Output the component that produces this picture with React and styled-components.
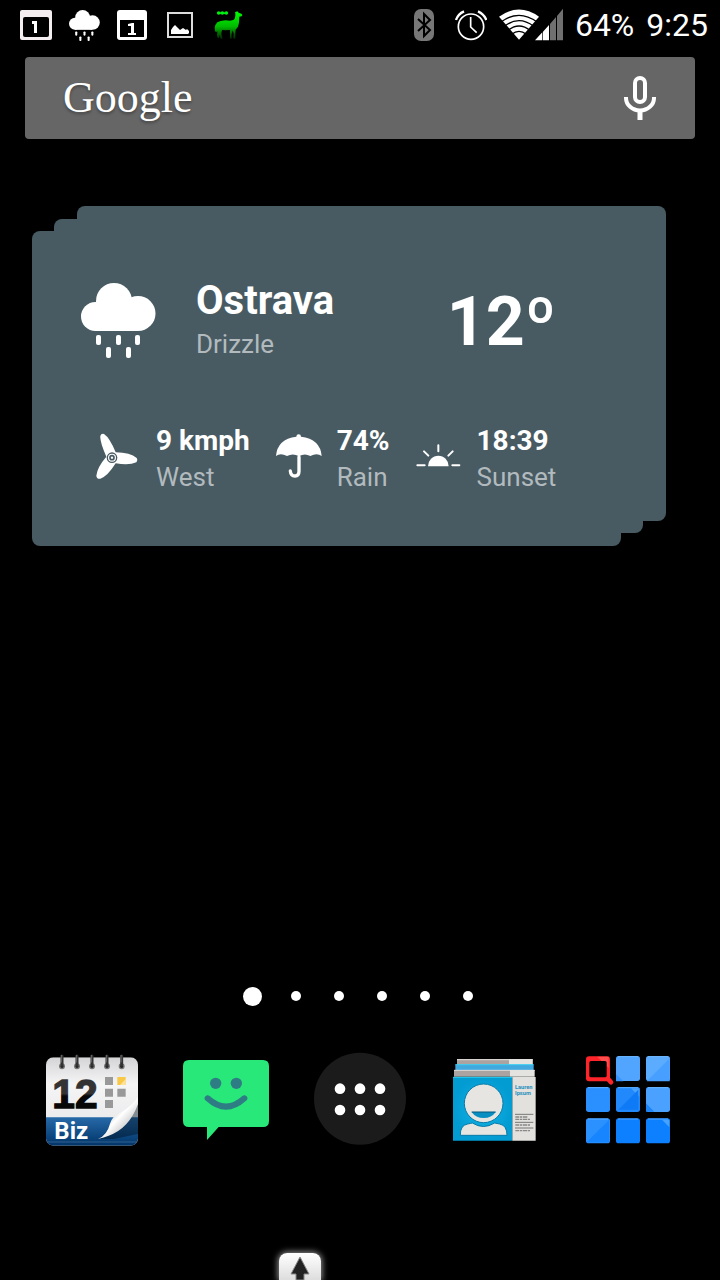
import React from "react";
import styled, { createGlobalStyle } from "styled-components";

const GlobalStyle = createGlobalStyle`
  *, *::before, *::after { box-sizing: border-box; }
  body { margin: 0; background: #000; color: #fff; font-family: Roboto, "Liberation Sans", sans-serif; }
  button { padding: 0; border: 0; background: none; color: inherit; font: inherit; cursor: pointer; }
  svg { display: block; }
`;

const Screen = styled.div`
  display: flex;
  flex-direction: column;
  min-height: 100vh;
  overflow: hidden;
  background: #000;
`;

const StatusBar = styled.header`
  display: flex;
  justify-content: space-between;
  align-items: center;
  height: 50px;
  padding: 0 12px;
`;

const Notifications = styled.div`
  display: flex;
`;

const NotificationCell = styled.span`
  display: flex;
  justify-content: center;
  align-items: center;
  width: 48px;
`;

const SystemIcons = styled.div`
  display: flex;
  align-items: center;
  font-size: 32px;
  line-height: 50px;
`;

const Indicators = styled.div`
  display: flex;
  align-items: center;
`;

const Indicator = styled.span`
  margin-left: ${({ $gap }) => $gap || 0}px;
`;

const Readout = styled.span`
  margin-left: 12px;
`;

const SearchBar = styled.div`
  display: flex;
  justify-content: space-between;
  align-items: center;
  height: 82px;
  margin: 7px 25px 0;
  padding: 0 39px 0 38px;
  border-radius: 4px;
  background: #666;
`;

const SearchButton = styled.button`
  flex: 1;
  text-align: left;
  font-family: "Liberation Serif", serif;
  font-size: 44px;
  line-height: 80px;
  text-shadow: 0 2px 3px rgba(0, 0, 0, 0.35);
`;

const CardStack = styled.section`
  display: grid;
  margin: 67px 54px 0 32px;
`;

const layers = {
  back: "0 0 25px 45px",
  middle: "13px 23px 13px 22px",
  front: "25px 45px 0 0",
};

const Card = styled.div`
  grid-area: 1 / 1;
  margin: ${({ $layer }) => layers[$layer]};
  border-radius: 8px;
  background: #485b63;
`;

const WeatherCard = styled(Card)`
  padding: 46px 0 50px;
`;

const Current = styled.div`
  display: grid;
  grid-template-columns: 115px 1fr auto;
  align-items: center;
  padding: 0 65px 0 49px;
`;

const City = styled.h1`
  margin: 0;
  font-size: 40px;
  font-weight: 700;
  line-height: 48px;
`;

const Muted = styled.div`
  color: #b2babe;
  font-size: 26px;
  line-height: 38px;
`;

const Temperature = styled.div`
  padding-top: 4px;
  font-size: 68px;
  font-weight: 700;
  line-height: 80px;
`;

const Stats = styled.div`
  display: flex;
  gap: 26px;
  margin-top: 60px;
  padding-left: 63px;
`;

const Stat = styled.div`
  display: flex;
  align-items: center;
  gap: 15px;
`;

const StatIcon = styled.span`
  padding-bottom: 8px;
`;

const StatValue = styled.div`
  font-size: 28px;
  font-weight: 700;
  line-height: 35px;
`;

const Pages = styled.nav`
  display: flex;
  justify-content: center;
  margin-top: auto;
`;

const PageButton = styled.button`
  display: flex;
  justify-content: center;
  align-items: center;
  width: 43px;
  height: 20px;
  &::before {
    content: "";
    width: ${({ $active }) => ($active ? 19 : 10)}px;
    height: ${({ $active }) => ($active ? 19 : 10)}px;
    border-radius: 50%;
    background: #fff;
  }
`;

const Dock = styled.nav`
  display: grid;
  grid-template-columns: repeat(5, 1fr);
  justify-items: center;
  margin: 45px 25px 106px;
`;

const DockButton = styled.button`
  width: 96px;
  height: 96px;
`;

const DrawerEdge = styled.footer`
  height: 27px;
  padding-left: 279px;
`;

const DrawerHandle = styled.button`
  display: flex;
  justify-content: center;
  width: 42px;
  height: 27px;
  border-radius: 8px 8px 0 0;
  background: linear-gradient(#fff, #ddd);
  box-shadow: 0 0 6px 1px rgba(255, 255, 255, 0.6);
`;

const DayIcon = () => (
  <svg width="34" height="32" viewBox="0 0 34 32" aria-hidden="true">
    <rect x="1" y="1" width="32" height="30" rx="2" fill="#f4eef0" />
    <rect x="4" y="8" width="26" height="20" rx="2" fill="#000" />
    <path d="M13 12h5v12h-3v-9h-2z" fill="#fff" />
  </svg>
);

const CloudIcon = ({ width, height }) => (
  <svg width={width} height={height} viewBox="0 0 75 75" aria-hidden="true">
    <g fill="#fff">
      <circle cx="14.500" cy="33.500" r="14.500" />
      <circle cx="33" cy="18" r="18" />
      <circle cx="57" cy="30.500" r="17.500" />
      <path d="M14 20h42v28H14z" />
      <rect x="15" y="52" width="5" height="10" rx="2" />
      <rect x="35" y="52" width="5" height="10" rx="2" />
      <rect x="54" y="52" width="5" height="10" rx="2" />
      <rect x="25" y="64" width="5" height="11" rx="2" />
      <rect x="45" y="64" width="5" height="11" rx="2" />
    </g>
  </svg>
);

const CalendarIcon = () => (
  <svg width="30" height="32" viewBox="0 0 30 32" aria-hidden="true">
    <rect y="1" width="30" height="30" rx="3" fill="#fff" />
    <path d="M3 11h24v17H3z" fill="#000" />
    <path d="M11 15l4-1h2v10h2v2h-8v-2h3v-7h-3z" fill="#fff" />
  </svg>
);

const PhotoIcon = () => (
  <svg width="26" height="26" viewBox="0 0 26 26" aria-hidden="true">
    <rect x="1" y="1" width="24" height="24" fill="none" stroke="#ddd" strokeWidth="2" />
    <path d="M4 22v-4l2-3 2-2 3 3 2 2 3-2 3 2 1-1 2 2v2l-1 1z" fill="#fff" />
  </svg>
);

const LlamaIcon = () => (
  <svg width="32" height="32" viewBox="636 28 96 96" aria-hidden="true">
    <defs>
      <linearGradient id="llama" x1="0" y1="0" x2="0" y2="1">
        <stop offset="0" stopColor="#0f0" />
        <stop offset="0.550" stopColor="#0b0" />
        <stop offset="1" stopColor="#032803" />
      </linearGradient>
    </defs>
    <path
      fill="url(#llama)"
      d="M705 38l7-3 4 4 8 3 3 4-2 4-7 1-1 18-3 12-7 9-1 11v16h-5l-1-3 1-12-3-10-3 11v14h-5V91l-13 1-11-1-2 10 1 7 3 9h-6l-4-10-1 8h-4l-2-7 1-13-4 3-3-4-1-10 2-8 6-8 10-4 14-2 14 1 10-2 4-4 2-9v-7z"
    />
    <g fill="#0e1">
      <circle cx="656" cy="40" r="5.500" />
      <circle cx="667" cy="40" r="5.500" />
      <circle cx="679" cy="40" r="5.500" />
      <path d="M654 38h27v5h-27z" />
    </g>
  </svg>
);

const BluetoothIcon = () => (
  <svg width="22" height="34" viewBox="0 0 22 34" aria-hidden="true">
    <rect x="1" y="1" width="20" height="32" rx="7" fill="#777" />
    <path d="M5 11l12 11-6 6V6l6 6L5 23" fill="none" stroke="#000" strokeWidth="2" />
  </svg>
);

const AlarmIcon = () => (
  <svg width="32" height="34" viewBox="168 27 96 102" aria-hidden="true">
    <g fill="none" stroke="#fff" strokeWidth="5">
      <circle cx="216" cy="83" r="38" />
      <path d="M215 54v30l18 17" />
      <path d="M171 63q6-18 24-26M237 37q18 8 25 26" strokeWidth="7" />
    </g>
  </svg>
);

const WifiIcon = () => (
  <svg width="40" height="34" viewBox="300 24 120 102" aria-hidden="true">
    <path d="M360 119L300 50Q360 7 420 50z" fill="#fff" />
    <g fill="none" stroke="#000" strokeWidth="4">
      <path d="M306 66Q360 26 414 66M316 79Q360 45 404 79M326 92Q360 64 394 92M338 103Q360 85 382 103" />
    </g>
  </svg>
);

const SignalIcon = () => (
  <svg width="28" height="34" viewBox="408 24 84 102" aria-hidden="true">
    <path d="M408 121l22-24v24zM432 95l18-20v46h-18z" fill="#fff" />
    <path d="M453 72l18-21v70h-18zM474 48l18-22v95h-18z" fill="#707070" />
  </svg>
);

const MicIcon = () => (
  <svg width="32" height="44" viewBox="0 0 32 44" aria-hidden="true">
    <g fill="none" stroke="#fff">
      <rect x="11" y="2" width="10" height="24" rx="5" strokeWidth="4" />
      <path d="M2 21v1a14 12.500 0 0 0 28 0v-1" strokeWidth="4" />
      <path d="M16 34v10" strokeWidth="5" />
    </g>
  </svg>
);

const WindIcon = () => (
  <svg width="46" height="46" viewBox="75 70 138 138" aria-hidden="true">
    <g fill="#fff">
      <path d="M91 79Q93 71 102 73Q119 84 137 128Q181 129 200 145Q204 151 199 158Q178 168 137 161Q112 201 91 207Q80 209 79 198Q82 172 109 141Q89 96 91 79z" />
    </g>
    <circle cx="126" cy="144" r="14" fill="#fff" stroke="#485b63" strokeWidth="4" />
    <circle cx="126" cy="144" r="6" fill="#fff" stroke="#485b63" strokeWidth="5" />
  </svg>
);

const UmbrellaIcon = () => (
  <svg width="46" height="46" viewBox="615 71 138 138" aria-hidden="true">
    <path
      fill="#fff"
      d="M615 140Q619 89 676 82Q676 75 683 75Q690 75 690 82Q748 89 752 140Q738 130 718 140Q701 130 684 141Q666 130 648 140Q628 130 615 140z"
    />
    <path d="M684 143v43q0 14-12 14-13 0-14-15" fill="none" stroke="#fff" strokeWidth="10" strokeLinecap="round" />
  </svg>
);

const SunsetIcon = () => (
  <svg width="46" height="46" viewBox="47 95 138 138" aria-hidden="true">
    <path d="M83 195a31 32 0 0 1 62 0z" fill="#fff" />
    <g stroke="#fff" strokeWidth="6" strokeLinecap="round">
      <path d="M114 132v18M71 150l13 13M157 150l-13 13" />
      <path d="M51 192h22M156 192h21" />
    </g>
  </svg>
);

const PlannerIcon = () => (
  <svg width="96" height="96" viewBox="42 33 288 288" aria-hidden="true">
    <defs>
      <linearGradient id="paper" x1="0" y1="0" x2="0" y2="1">
        <stop offset="0" stopColor="#d4d4d6" />
        <stop offset="0.300" stopColor="#f5f5f6" />
        <stop offset="1" stopColor="#e4e4e6" />
      </linearGradient>
      <linearGradient id="band" x1="0" y1="0" x2="0" y2="1">
        <stop offset="0" stopColor="#2769a9" />
        <stop offset="1" stopColor="#003569" />
      </linearGradient>
      <linearGradient id="curl" x1="0" y1="0" x2="1" y2="1">
        <stop offset="0.250" stopColor="#aaa" />
        <stop offset="0.500" stopColor="#fff" />
        <stop offset="0.800" stopColor="#bbb" />
      </linearGradient>
      <linearGradient id="ink" x1="0" y1="0" x2="0" y2="1">
        <stop offset="0.500" stopColor="#333" />
        <stop offset="0.550" stopColor="#080808" />
      </linearGradient>
      <clipPath id="sheet">
        <rect x="48" y="52" width="276" height="265" rx="22" />
      </clipPath>
    </defs>
    <g clipPath="url(#sheet)">
      <path d="M48 52h276v265H48z" fill="url(#paper)" />
      <path d="M48 232h276v85H48z" fill="url(#band)" />
      <path d="M324 190Q290 268 206 297h45l73-15z" fill="#012" opacity="0.450" />
      <path d="M324 172v20Q298 265 236 287Q222 293 204 297Q231 286 240 251Q247 228 272 217Q307 198 324 172z" fill="url(#curl)" />
      <path d="M50 306h272" stroke="#8fa9c0" strokeWidth="2" opacity="0.500" />
    </g>
    <g stroke="#333" strokeWidth="9" strokeLinecap="round">
      {[96, 141, 186, 231, 275].map((x) => (
        <g key={x}>
          <circle cx={x} cy="79" r="7" fill="#222" stroke="#777" strokeWidth="4" />
          <path d={`M${x} 48v27`} />
          <path d={`M${x - 2} 46v20`} stroke="#888" strokeWidth="2" />
        </g>
      ))}
    </g>
    <g fill="#999">
      <path d="M225 111h24v24h-24zM225 146h24v24h-24zM225 180h24v24h-24zM262 146h25v24h-25z" />
      <path d="M262 111h25v24h-25z" fill="#f9c846" />
      <path d="M270 135l17-18v18z" fill="#fde29a" />
    </g>
    <text x="67" y="203" fontFamily="'Liberation Sans', sans-serif" fontSize="122" fontWeight="700" fill="url(#ink)" stroke="url(#ink)" strokeWidth="4">12</text>
    <text x="73" y="297" fontFamily="Roboto, sans-serif" fontSize="72" fontWeight="700" fill="#fff">Biz</text>
  </svg>
);

const MessageIcon = () => (
  <svg width="96" height="96" viewBox="444 33 288 288" aria-hidden="true">
    <path d="M477 60h222q18 0 18 18v165q0 18-18 18H566l-35 39v-39h-54q-18 0-18-18V78q0-18 18-18z" fill="#27e879" />
    <circle cx="557" cy="130" r="17" fill="#2f7d84" />
    <circle cx="619" cy="130" r="17" fill="#2f7d84" />
    <path d="M533 175q55 50 110 0" fill="none" stroke="#2f7d84" strokeWidth="18" strokeLinecap="round" />
  </svg>
);

const AppsIcon = () => (
  <svg width="96" height="96" viewBox="36 33 288 288" aria-hidden="true">
    <circle cx="180" cy="176" r="138" fill="#1b1b1b" />
    <g fill="#fff">
      {[120, 180, 240].map((x) => (
        <React.Fragment key={x}>
          <circle cx={x} cy="146" r="16" />
          <circle cx={x} cy="210" r="16" />
        </React.Fragment>
      ))}
    </g>
  </svg>
);

const ContactsIcon = () => (
  <svg width="96" height="96" viewBox="438 33 288 288" aria-hidden="true">
    <defs>
      <radialGradient id="portrait">
        <stop offset="0" stopColor="#14b5e6" />
        <stop offset="1" stopColor="#029bd2" />
      </radialGradient>
    </defs>
    <path d="M471 58h227v18H471z" fill="#aaa3a1" />
    <path d="M627 58h71v18h-71zM630 90h74v20h-74z" fill="#e4e3df" />
    <path d="M466 74h235v16H466z" fill="#42a9df" />
    <path d="M466 74h235" stroke="#39d0f2" strokeWidth="3" />
    <path d="M462 91h168v19H462z" fill="#aaa3a1" />
    <path d="M471 59h227M462 91h242" stroke="#e6e4e0" strokeWidth="3" />
    <path d="M459 111h178v191H459z" fill="url(#portrait)" />
    <path d="M459 112h178" stroke="#27cdf0" strokeWidth="3" />
    <path d="M637 111h70v191h-70z" fill="#e2e1dd" />
    <g stroke="#087ba7" strokeWidth="3">
      <path d="M481 286q-1-30 22-34 10-2 14-3 33 21 67 0l15 3q22 4 22 34z" fill="#e6e5e1" />
      <circle cx="551" cy="190" r="58" fill="#e6e5e1" />
    </g>
    <path d="M515 216h72q-12 18-36 18t-36-18z" fill="#078fc2" />
    <path d="M515 216h72" stroke="#05577c" strokeWidth="3" />
    <g fontFamily="Roboto, sans-serif" fontSize="17" fontWeight="700" fill="#258fbd">
      <text x="645" y="148">Lauren</text>
      <text x="645" y="164">Ipsum</text>
    </g>
    <path d="M645 223h55M645 247h55M645 264h55" stroke="#777" strokeWidth="3" />
    <path d="M646 231h38M646 238h44M646 255h46M646 272h46" stroke="#888" strokeWidth="4" strokeDasharray="12 2 7 2" />
  </svg>
);

const tiles = [
  { x: 138, y: 50, base: "#51a5ff", accent: "#3994fd", cut: "M138 102l22 22h-22z" },
  { x: 228, y: 50, base: "#5bacff", accent: "#47a0ff", cut: "M299 55v69h-69z" },
  { x: 48, y: 143, base: "#2b90ff", accent: "#2b90ff", cut: "" },
  { x: 138, y: 143, base: "#2189fb", accent: "#4ca2fc", cut: "M183 145h25v25z" },
  { x: 228, y: 143, base: "#4aa1ff", accent: "#1c85f8", cut: "M228 190l25 25h-25z" },
  { x: 48, y: 237, base: "#2a91ff", accent: "#1685ff", cut: "M117 240v67H50z" },
  { x: 138, y: 237, base: "#0c80ff", accent: "#0c80ff", cut: "" },
  { x: 228, y: 237, base: "#0c80ff", accent: "#46a1ff", cut: "M276 239h22v23z" },
];

const TilesIcon = () => (
  <svg width="96" height="96" viewBox="30 33 288 288" aria-hidden="true">
    {tiles.map(({ x, y, base, accent, cut }) => (
      <g key={`${x}-${y}`}>
        <rect x={x} y={y - 2} width="72" height="75" rx="8" fill={base} />
        <path d={cut} fill={accent} />
        <path d={`M${x + 6} ${y}h60`} stroke="#79bdff" strokeWidth="2" />
      </g>
    ))}
    <path d="M205 149v60h-60z" fill="#0e7af5" />
    <path d="M110 112l13 15" stroke="#ff2429" strokeWidth="14" strokeLinecap="round" />
    <rect x="48" y="49" width="72" height="75" rx="9" fill="#ff2429" />
    <path d="M82 50h34v34z" fill="#ff6b65" opacity="0.600" />
    <rect x="58" y="63" width="52" height="49" rx="5" fill="#000" />
  </svg>
);

const ArrowIcon = () => (
  <svg width="20" height="27" viewBox="0 0 20 27" aria-hidden="true">
    <path d="M10 4l9 17h-5v6H6v-6H1z" fill="#222" stroke="#888" strokeWidth="1" />
  </svg>
);

const notifications = [
  { name: "Day planner", icon: <DayIcon /> },
  { name: "Rain", icon: <CloudIcon width="31" height="31" /> },
  { name: "Calendar", icon: <CalendarIcon /> },
  { name: "Screenshot", icon: <PhotoIcon /> },
  { name: "Llama", icon: <LlamaIcon /> },
];

const indicators = [
  { name: "Bluetooth", icon: <BluetoothIcon /> },
  { name: "Alarm", icon: <AlarmIcon />, gap: 20 },
  { name: "Wifi", icon: <WifiIcon />, gap: 12 },
  { name: "Signal", icon: <SignalIcon />, gap: -4 },
];

const stats = [
  { icon: <WindIcon />, value: "9 kmph", label: "West" },
  { icon: <UmbrellaIcon />, value: "74%", label: "Rain" },
  { icon: <SunsetIcon />, value: "18:39", label: "Sunset" },
];

const apps = [
  { name: "Business Calendar", icon: <PlannerIcon /> },
  { name: "Messages", icon: <MessageIcon /> },
  { name: "All apps", icon: <AppsIcon /> },
  { name: "Contacts", icon: <ContactsIcon /> },
  { name: "App search", icon: <TilesIcon /> },
];

export default function App() {
  return (
    <Screen>
      <GlobalStyle />
      <StatusBar>
        <Notifications>
          {notifications.map(({ name, icon }) => (
            <NotificationCell key={name}>{icon}</NotificationCell>
          ))}
        </Notifications>
        <SystemIcons>
          <Indicators>
            {indicators.map(({ name, icon, gap }) => (
              <Indicator key={name} $gap={gap}>{icon}</Indicator>
            ))}
          </Indicators>
          <Readout>64%</Readout>
          <Readout>9:25</Readout>
        </SystemIcons>
      </StatusBar>
      <SearchBar>
        <SearchButton type="button">Google</SearchButton>
        <button type="button" aria-label="Voice search"><MicIcon /></button>
      </SearchBar>
      <main>
        <CardStack>
          <Card $layer="back" />
          <Card $layer="middle" />
          <WeatherCard $layer="front">
            <Current>
              <CloudIcon width="75" height="75" />
              <div>
                <City>Ostrava</City>
                <Muted>Drizzle</Muted>
              </div>
              <Temperature>12º</Temperature>
            </Current>
            <Stats>
              {stats.map(({ icon, value, label }) => (
                <Stat key={label}>
                  <StatIcon>{icon}</StatIcon>
                  <div>
                    <StatValue>{value}</StatValue>
                    <Muted>{label}</Muted>
                  </div>
                </Stat>
              ))}
            </Stats>
          </WeatherCard>
        </CardStack>
      </main>
      <Pages aria-label="Home screens">
        {[1, 2, 3, 4, 5, 6].map((n) => (
          <PageButton key={n} type="button" aria-label={`Screen ${n}`} $active={n === 1} />
        ))}
      </Pages>
      <Dock aria-label="Dock">
        {apps.map(({ name, icon }) => (
          <DockButton key={name} type="button" aria-label={name}>{icon}</DockButton>
        ))}
      </Dock>
      <DrawerEdge>
        <DrawerHandle type="button" aria-label="Open drawer"><ArrowIcon /></DrawerHandle>
      </DrawerEdge>
    </Screen>
  );
}
